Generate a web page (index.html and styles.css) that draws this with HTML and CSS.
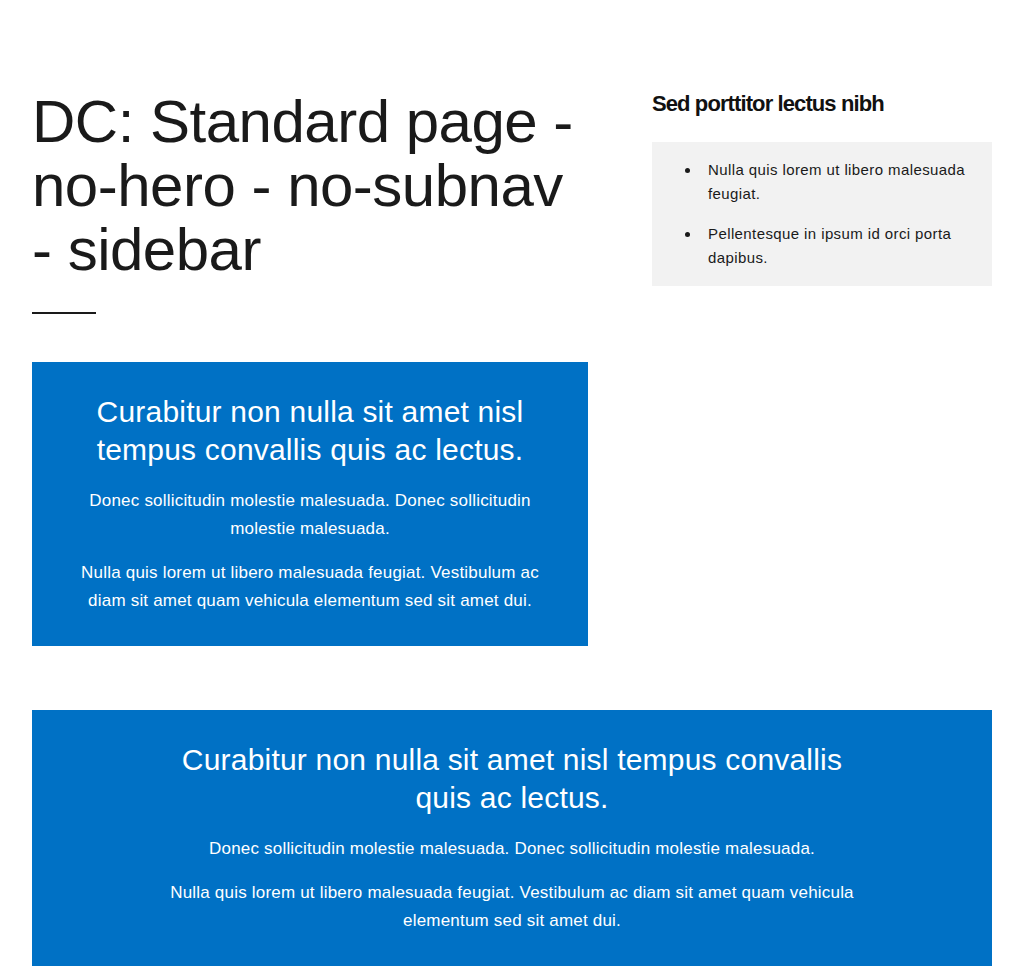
FILE: index.html
```html
<!DOCTYPE html>
<html lang="en">
<head>
<meta charset="utf-8">
<title>DC: Standard page - no-hero - no-subnav - sidebar</title>
<link rel="stylesheet" href="styles.css">
</head>
<body>
<div class="page">
  <div class="layout">
    <main class="main">
      <h1 class="title">DC: Standard page - no-hero - no-subnav -&nbsp;sidebar</h1>
      <hr class="rule">
      <section class="callout">
        <h2 class="callout-title">Curabitur non nulla sit amet nisl tempus convallis quis ac lectus.</h2>
        <p>Donec sollicitudin molestie malesuada. Donec sollicitudin molestie malesuada.</p>
        <p>Nulla quis lorem ut libero malesuada feugiat. Vestibulum ac diam sit amet quam vehicula elementum sed sit amet dui.</p>
      </section>
    </main>
    <aside class="sidebar">
      <h3 class="side-title">Sed porttitor lectus nibh</h3>
      <div class="side-box">
        <ul class="side-list">
          <li>Nulla quis lorem ut libero malesuada feugiat.</li>
          <li>Pellentesque in ipsum id orci porta dapibus.</li>
        </ul>
      </div>
    </aside>
  </div>
  <section class="callout callout-wide">
    <div class="callout-inner">
      <h2 class="callout-title">Curabitur non nulla sit amet nisl tempus convallis quis ac lectus.</h2>
      <p>Donec sollicitudin molestie malesuada. Donec sollicitudin molestie malesuada.</p>
      <p>Nulla quis lorem ut libero malesuada feugiat. Vestibulum ac diam sit amet quam vehicula elementum sed sit amet dui.</p>
    </div>
  </section>
</div>
</body>
</html>
```
FILE: styles.css
```css
* { box-sizing: border-box; }
html, body { margin: 0; padding: 0; background: #fff; }
body {
  font-family: "Liberation Sans", Arial, sans-serif;
  color: #1a1a1a;
}
.page {
  padding: 84px 32px 0;
}
.layout {
  display: grid;
  grid-template-columns: 556px 340px;
  column-gap: 64px;
  align-items: start;
}
.title {
  margin: 6px 0 0;
  font-weight: 400;
  font-size: 60px;
  line-height: 64px;
  letter-spacing: -0.5px;
}
.rule {
  margin: 30px 0 48px;
  width: 64px;
  height: 2px;
  border: 0;
  background: #1a1a1a;
}
.callout {
  background: #0071c5;
  color: #fff;
  text-align: center;
  padding: 31px 48px 31px;
}
.callout-title {
  margin: 0 0 18px;
  font-weight: 400;
  font-size: 30px;
  line-height: 38px;
  letter-spacing: 0.2px;
}
.callout p {
  margin: 0 0 16px;
  font-size: 17px;
  line-height: 28px;
  letter-spacing: 0.2px;
}
.callout p:last-child { margin-bottom: 0; }
.callout-wide {
  margin-top: 64px;
  padding-bottom: 40px;
}
.callout-inner {
  max-width: 704px;
  margin: 0 auto;
}
.side-title {
  margin: 6px 0 24px;
  font-size: 22px;
  line-height: 28px;
  font-weight: 700;
  letter-spacing: -0.9px;
  color: #111;
}
.side-box {
  background: #f2f2f2;
  padding: 16px 24px 16px 56px;
}
.side-list {
  margin: 0;
  padding: 0;
  list-style: none;
}
.side-list li {
  position: relative;
  font-size: 15px;
  line-height: 24px;
  letter-spacing: 0.4px;
  margin-bottom: 16px;
}
.side-list li::before {
  content: "";
  position: absolute;
  left: -23px;
  top: 10px;
  width: 5px;
  height: 5px;
  border-radius: 50%;
  background: #1a1a1a;
}
.side-list li:last-child { margin-bottom: 0; }
```
